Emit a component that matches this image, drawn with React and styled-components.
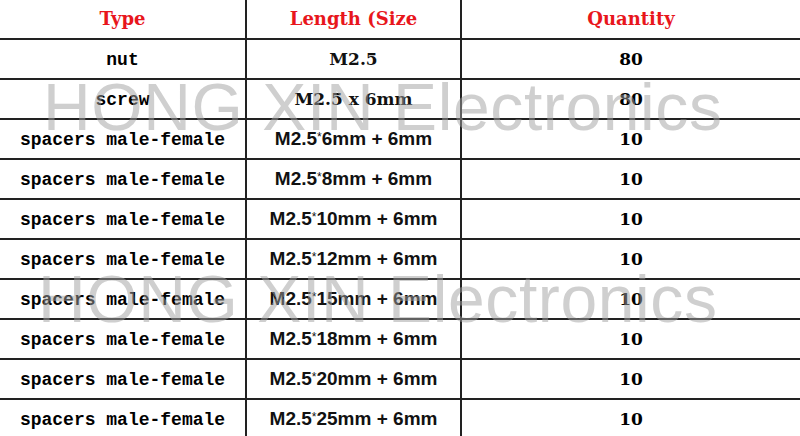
import styled, { createGlobalStyle } from "styled-components";

const rows = [
  { type: "nut", size: "M2.5", serif: true, qty: "80" },
  { type: "screw", size: "M2.5 x 6mm", serif: true, qty: "80" },
  { type: "spacers male-female", size: "M2.5*6mm + 6mm", qty: "10" },
  { type: "spacers male-female", size: "M2.5*8mm + 6mm", qty: "10" },
  { type: "spacers male-female", size: "M2.5*10mm + 6mm", qty: "10" },
  { type: "spacers male-female", size: "M2.5*12mm + 6mm", qty: "10" },
  { type: "spacers male-female", size: "M2.5*15mm + 6mm", qty: "10" },
  { type: "spacers male-female", size: "M2.5*18mm + 6mm", qty: "10" },
  { type: "spacers male-female", size: "M2.5*20mm + 6mm", qty: "10" },
  { type: "spacers male-female", size: "M2.5*25mm + 6mm", qty: "10" },
];

const App = () => {
  return (
    <>
      <GlobalStyle />
      <Sheet>
        <Table>
          <Head>Type</Head>
          <Head>Length (Size</Head>
          <Head>Quantity</Head>

          {rows.map((row, i) => (
            <Row key={i}>
              <TypeCell>{row.type}</TypeCell>
              <SizeCell $serif={row.serif}>
                {row.serif ? (
                  row.size
                ) : (
                  <>
                    {row.size.split("*")[0]}
                    <Star>*</Star>
                    {row.size.split("*")[1]}
                  </>
                )}
              </SizeCell>
              <QtyCell>{row.qty}</QtyCell>
            </Row>
          ))}
        </Table>

        {/* watermark stamped over the table */}
        <Watermark $top={74} $left={43}>HONG XIN Electronics</Watermark>
        <Watermark $top={266} $left={38}>HONG XIN Electronics</Watermark>
      </Sheet>
    </>
  );
};

export default App;

const GlobalStyle = createGlobalStyle`
  html, body {
    margin: 0;
    padding: 0;
    background: #fff;
  }
`;

const Sheet = styled.div`
  position: relative;
  width: 800px;
  height: 436px;
  overflow: hidden;
  background: #fff;
`;

const Table = styled.div`
  display: grid;
  grid-template-columns: 247px 215px 1fr;
  grid-auto-rows: 40px;
`;

const Row = styled.div`
  display: contents;
`;

const Cell = styled.div`
  display: flex;
  align-items: center;
  justify-content: center;
  box-sizing: border-box;
  border-bottom: 2px solid #222;
  color: #000;
  white-space: nowrap;

  &:not(:nth-child(3n)) {
    border-right: 2px solid #222;
  }
`;

const Head = styled(Cell)`
  font-family: "DejaVu Serif", "Liberation Serif", serif;
  font-weight: 700;
  font-size: 18px;
  color: #e8161c;
  padding-bottom: 2px;
`;

const TypeCell = styled(Cell)`
  font-family: "Liberation Mono", "DejaVu Sans Mono", monospace;
  font-weight: 700;
  font-size: 18px;
  padding-top: 2px;
`;

const SizeCell = styled(Cell)`
  font-family: ${(p) =>
    p.$serif
      ? `"DejaVu Serif", "Liberation Serif", serif`
      : `"Liberation Sans", Arial, sans-serif`};
  font-weight: 700;
  font-size: ${(p) => (p.$serif ? "17px" : "19px")};
  color: #111;
`;

const Star = styled.span`
  font-size: 12px;
  font-weight: 400;
  align-self: flex-start;
  margin-top: 10px;
`;

const QtyCell = styled(Cell)`
  font-family: "DejaVu Serif", "Liberation Serif", serif;
  font-weight: 700;
  font-size: 17px;
`;

const Watermark = styled.div`
  position: absolute;
  top: ${(p) => p.$top}px;
  left: ${(p) => p.$left}px;
  font-family: "Liberation Sans", Arial, sans-serif;
  font-size: 66px;
  line-height: 1;
  letter-spacing: 0.6px;
  color: rgba(160, 160, 160, 0.5);
  white-space: nowrap;
  pointer-events: none;
`;
